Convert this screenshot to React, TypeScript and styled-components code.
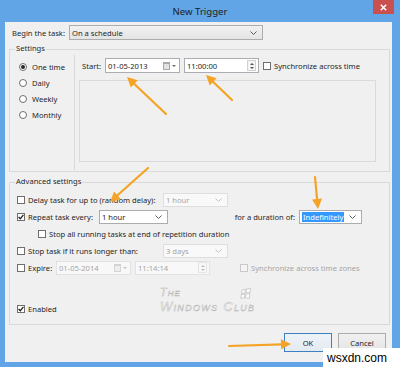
import React from 'react';
import styled, { createGlobalStyle } from 'styled-components';

const GlobalStyle = createGlobalStyle`
  html, body {
    margin: 0;
    padding: 0;
    background: #ffffff;
  }
  #root {
    width: 400px;
    height: 367px;
  }
`;

const UI_FONT = `"Noto Sans", "Liberation Sans", "DejaVu Sans", sans-serif`;

const Window = styled.div`
  position: relative;
  width: 400px;
  height: 367px;
  box-sizing: border-box;
  padding: 0 8px 5px 5px;
  background: #62a5e6;
  display: flex;
  flex-direction: column;
  overflow: hidden;
  font-family: ${UI_FONT};
`;

const TitleBar = styled.div`
  height: 22px;
  margin: 0 -8px 0 -5px;
  padding: 0 6px;
  display: grid;
  grid-template-columns: 1fr auto 1fr;
  align-items: center;
`;

const TitleText = styled.div`
  grid-column: 2;
  font-size: 9.6px;
  color: #1c1c1c;
`;

const CloseButton = styled.div`
  grid-column: 3;
  justify-self: end;
  align-self: start;
  width: 21px;
  height: 14px;
  background: #c9504c;
  display: flex;
  align-items: center;
  justify-content: center;
`;

const Body = styled.div`
  flex: 1;
  display: flex;
  flex-direction: column;
  padding: 3px 2px 0 4px;
  background: #f0f0f0;
  font-size: 7.6px;
  color: #262626;
`;

const FieldRow = styled.div`
  display: flex;
  align-items: center;
  height: 15px;
  padding-left: 3px;
`;

const FieldLabel = styled.div<{ $w: number }>`
  flex: none;
  width: ${p => p.$w}px;
  white-space: nowrap;
`;

const ComboBox = styled.div<{ $w: number; $h?: number; $flat?: boolean; $disabled?: boolean; $ml?: number }>`
  flex: none;
  box-sizing: border-box;
  width: ${p => p.$w}px;
  height: ${p => p.$h ?? 14}px;
  margin-left: ${p => p.$ml ?? 0}px;
  display: flex;
  align-items: center;
  justify-content: space-between;
  padding: 0 5px 0 2px;
  border: 1px solid ${p => (p.$disabled ? '#dedede' : '#acacac')};
  background: ${p => (p.$flat ? (p.$disabled ? '#f9f9f9' : '#ffffff') : 'linear-gradient(#f1f1f1, #e4e4e4)')};
  color: ${p => (p.$disabled ? '#a6a6a6' : 'inherit')};
  white-space: nowrap;
`;

const GroupBox = styled.section<{ $gap: number }>`
  margin-top: ${p => p.$gap}px;
  border: 1px solid #d9d9d9;
  display: flex;
  flex-direction: column;
`;

const Legend = styled.div`
  align-self: flex-start;
  margin: -7px 0 0 5px;
  padding: 0 1px;
  height: 10px;
  line-height: 10px;
  background: #f0f0f0;
`;

const SettingsContent = styled.div`
  display: flex;
  height: 118px;
`;

const RecurrenceColumn = styled.div`
  flex: none;
  box-sizing: border-box;
  width: 65px;
  margin: 2px 0 1px;
  padding: 4px 0 0 9px;
  border-right: 1px solid #d9d9d9;
`;

const RadioRow = styled.div`
  display: flex;
  align-items: center;
  gap: 5px;
  height: 16px;
`;

const Radio = styled.span<{ $checked?: boolean }>`
  flex: none;
  box-sizing: border-box;
  width: 8px;
  height: 8px;
  border-radius: 50%;
  border: 1px solid #707070;
  background: #ffffff;
  display: flex;
  align-items: center;
  justify-content: center;

  &::after {
    content: '';
    display: ${p => (p.$checked ? 'block' : 'none')};
    width: 4px;
    height: 4px;
    border-radius: 50%;
    background: #262626;
  }
`;

const RightPane = styled.div`
  flex: 1;
  display: flex;
  flex-direction: column;
  padding-left: 4px;
`;

const StartRow = styled.div`
  display: flex;
  align-items: center;
  height: 15px;
  margin-top: 5px;
  padding-left: 3px;
`;

const DetailPanel = styled.div`
  box-sizing: border-box;
  width: 297px;
  height: 82px;
  margin-top: 7px;
  border: 1px solid #dadada;
`;

const AdvancedContent = styled.div`
  position: relative;
  display: flex;
  flex-direction: column;
  padding: 5px 0 7px 7px;
`;

const OptionRow = styled.div<{ $indent?: number; $mt?: number }>`
  display: flex;
  align-items: center;
  height: 17px;
  padding-left: ${p => p.$indent ?? 0}px;
  margin-top: ${p => p.$mt ?? 0}px;
`;

const LabelCell = styled.div<{ $w?: number; $ml?: number }>`
  flex: none;
  display: flex;
  align-items: center;
  width: ${p => (p.$w ? `${p.$w}px` : 'auto')};
  margin-left: ${p => p.$ml ?? 0}px;
`;

const CheckBox = styled.span<{ $disabled?: boolean }>`
  flex: none;
  box-sizing: border-box;
  width: 8px;
  height: 8px;
  border: 1px solid ${p => (p.$disabled ? '#c8c8c8' : '#6e6e6e')};
  background: ${p => (p.$disabled ? '#f4f4f4' : '#ffffff')};
  display: flex;
  align-items: center;
  justify-content: center;
`;

const CheckLabel = styled.span<{ $disabled?: boolean }>`
  margin-left: 3px;
  white-space: nowrap;
  color: ${p => (p.$disabled ? '#a6a6a6' : 'inherit')};
`;

const Caption = styled.div<{ $w: number }>`
  flex: none;
  box-sizing: border-box;
  width: ${p => p.$w}px;
  padding-right: 4px;
  text-align: right;
  white-space: nowrap;
`;

const Highlight = styled.span`
  background: #3399ff;
  color: #ffffff;
  padding: 0 1px;
`;

const EditField = styled.div<{ $w: number; $h?: number; $disabled?: boolean; $ml?: number }>`
  flex: none;
  box-sizing: border-box;
  width: ${p => p.$w}px;
  height: ${p => p.$h ?? 15}px;
  margin-left: ${p => p.$ml ?? 0}px;
  display: flex;
  align-items: center;
  padding: 0 2px 0 2px;
  border: 1px solid ${p => (p.$disabled ? '#e2e2e2' : '#abadb3')};
  background: ${p => (p.$disabled ? '#f8f8f8' : '#ffffff')};
  color: ${p => (p.$disabled ? '#a6a6a6' : 'inherit')};
  white-space: nowrap;
`;

const FieldText = styled.span`
  flex: 1;
`;

const CalendarGlyph = styled.span<{ $disabled?: boolean }>`
  flex: none;
  box-sizing: border-box;
  width: 7px;
  height: 8px;
  border: 1px solid ${p => (p.$disabled ? '#d4d4d4' : '#a9a9a9')};
  border-top-width: 2px;
  background: ${p => (p.$disabled ? '#eeeeee' : '#e2e2e2')};
  margin-right: 2px;
`;

const DropArrow = styled.span<{ $disabled?: boolean }>`
  flex: none;
  width: 0;
  height: 0;
  margin-right: 1px;
  border-left: 2px solid transparent;
  border-right: 2px solid transparent;
  border-top: 2px solid ${p => (p.$disabled ? '#c4c4c4' : '#6a6a6a')};
`;

const Spinner = styled.span<{ $disabled?: boolean }>`
  flex: none;
  box-sizing: border-box;
  width: 9px;
  height: 11px;
  border: 1px solid ${p => (p.$disabled ? '#e4e4e4' : '#d2d2d2')};
  background: ${p => (p.$disabled ? '#f8f8f8' : '#f4f4f4')};
  display: flex;
  flex-direction: column;
  align-items: center;
  justify-content: center;
  gap: 2px;
`;

const SpinTip = styled.span<{ $down?: boolean; $disabled?: boolean }>`
  width: 0;
  height: 0;
  border-left: 2px solid transparent;
  border-right: 2px solid transparent;
  ${p => (p.$down ? 'border-top' : 'border-bottom')}: 2px solid ${p => (p.$disabled ? '#bdbdbd' : '#555555')};
`;

const Watermark = styled.div`
  position: absolute;
  left: 150px;
  top: 101px;
  font-family: "Liberation Sans", sans-serif;
  font-style: italic;
  font-variant: small-caps;
  color: #fbfbfb;
  -webkit-text-stroke: 0.45px #b4b4b4;
  line-height: 1;
  pointer-events: none;
`;

const MarkSmall = styled.div`
  font-size: 11px;
  letter-spacing: 1px;
`;

const MarkLarge = styled.div`
  display: flex;
  align-items: flex-end;
  margin-top: 2px;
  font-size: 13px;
  letter-spacing: 1.3px;
`;

const MarkLogo = styled.svg`
  position: absolute;
  left: 80px;
  top: 1px;
`;

const ButtonBar = styled.div`
  display: flex;
  justify-content: flex-end;
  gap: 6px;
  margin-top: 8px;
  padding-right: 4px;
`;

const DialogButton = styled.div<{ $default?: boolean }>`
  box-sizing: border-box;
  width: 48px;
  height: 19px;
  display: flex;
  align-items: center;
  justify-content: center;
  border: 1px solid ${p => (p.$default ? '#3d7fbf' : '#acacac')};
  background: ${p => (p.$default ? 'linear-gradient(#eef3f8, #e3eaf1)' : 'linear-gradient(#f0f0f0, #e5e5e5)')};
`;

const Overlay = styled.svg`
  position: absolute;
  left: 0;
  top: 0;
  pointer-events: none;
`;

const SiteStamp = styled.div`
  position: absolute;
  right: 0;
  bottom: 0;
  box-sizing: border-box;
  width: 77px;
  height: 19px;
  padding-left: 4px;
  background: #ffffff;
  display: flex;
  align-items: center;
  font-family: "Liberation Sans", sans-serif;
  font-size: 12px;
  color: #000000;
`;

function Chevron({ disabled }: { disabled?: boolean }) {
  return (
    <svg width="7" height="4" viewBox="0 0 7 4">
      <polyline points="0.5,0.5 3.5,3.5 6.5,0.5" fill="none" stroke={disabled ? '#c4c4c4' : '#5a5a5a'} strokeWidth="1" />
    </svg>
  );
}

function Check({ checked, disabled }: { checked?: boolean; disabled?: boolean }) {
  return (
    <CheckBox $disabled={disabled}>
      {checked && (
        <svg width="6" height="6" viewBox="0 0 6 6">
          <polyline points="0.6,3 2.3,4.8 5.4,0.8" fill="none" stroke="#1e1e1e" strokeWidth="1.3" />
        </svg>
      )}
    </CheckBox>
  );
}

function DateField({ value, disabled, h }: { value: string; disabled?: boolean; h?: number }) {
  return (
    <EditField $w={75} $h={h} $disabled={disabled}>
      <FieldText>{value}</FieldText>
      <CalendarGlyph $disabled={disabled} />
      <DropArrow $disabled={disabled} />
    </EditField>
  );
}

function TimeField({ value, disabled, h }: { value: string; disabled?: boolean; h?: number }) {
  return (
    <EditField $w={75} $h={h} $ml={4} $disabled={disabled}>
      <FieldText>{value}</FieldText>
      <Spinner $disabled={disabled}>
        <SpinTip $disabled={disabled} />
        <SpinTip $down $disabled={disabled} />
      </Spinner>
    </EditField>
  );
}

const arrows: [number, number, number, number][] = [
  [166, 114, 127, 77],
  [232, 100, 206, 75],
  [148, 168, 110, 202],
  [315, 177, 318, 209],
  [229, 346, 291, 344],
];

function Arrow({ x1, y1, x2, y2 }: { x1: number; y1: number; x2: number; y2: number }) {
  const len = Math.hypot(x2 - x1, y2 - y1);
  const ux = (x2 - x1) / len;
  const uy = (y2 - y1) / len;
  const bx = x2 - ux * 10;
  const by = y2 - uy * 10;
  const pts = `${x2},${y2} ${bx - uy * 5},${by + ux * 5} ${bx + uy * 5},${by - ux * 5}`;
  return (
    <g>
      <line x1={x1} y1={y1} x2={bx + ux} y2={by + uy} stroke="#f5a326" strokeWidth="2.2" strokeLinecap="round" />
      <polygon points={pts} fill="#f5a326" />
    </g>
  );
}

export default function App() {
  return (
    <>
      <GlobalStyle />
      <Window>
        <TitleBar>
          <TitleText>New Trigger</TitleText>
          <CloseButton>
            <svg width="7" height="7" viewBox="0 0 7 7">
              <path d="M0.8 0.8 L6.2 6.2 M6.2 0.8 L0.8 6.2" stroke="#ffffff" strokeWidth="1.5" />
            </svg>
          </CloseButton>
        </TitleBar>

        <Body>
          <FieldRow>
            <FieldLabel $w={57}>Begin the task:</FieldLabel>
            <ComboBox $w={194} $h={15}>
              <span>On a schedule</span>
              <Chevron />
            </ComboBox>
          </FieldRow>

          <GroupBox $gap={9}>
            <Legend>Settings</Legend>
            <SettingsContent>
              <RecurrenceColumn>
                <RadioRow><Radio $checked />One time</RadioRow>
                <RadioRow><Radio />Daily</RadioRow>
                <RadioRow><Radio />Weekly</RadioRow>
                <RadioRow><Radio />Monthly</RadioRow>
              </RecurrenceColumn>
              <RightPane>
                <StartRow>
                  <FieldLabel $w={23}>Start:</FieldLabel>
                  <DateField value="01-05-2013" />
                  <TimeField value="11:00:00" />
                  <LabelCell $ml={4}>
                    <Check />
                    <CheckLabel>Synchronize across time</CheckLabel>
                  </LabelCell>
                </StartRow>
                <DetailPanel />
              </RightPane>
            </SettingsContent>
          </GroupBox>

          <GroupBox $gap={10}>
            <Legend>Advanced settings</Legend>
            <AdvancedContent>
              <OptionRow>
                <LabelCell $w={146}>
                  <Check />
                  <CheckLabel>Delay task for up to (random delay):</CheckLabel>
                </LabelCell>
                <ComboBox $w={65} $flat $disabled>
                  <span>1 hour</span>
                  <Chevron disabled />
                </ComboBox>
              </OptionRow>

              <OptionRow>
                <LabelCell $w={82}>
                  <Check checked />
                  <CheckLabel>Repeat task every:</CheckLabel>
                </LabelCell>
                <ComboBox $w={69} $flat>
                  <span>1 hour</span>
                  <Chevron />
                </ComboBox>
                <Caption $w={131}>for a duration of:</Caption>
                <ComboBox $w={63} $flat>
                  <Highlight>Indefinitely</Highlight>
                  <Chevron />
                </ComboBox>
              </OptionRow>

              <OptionRow $indent={21}>
                <Check />
                <CheckLabel>Stop all running tasks at end of repetition duration</CheckLabel>
              </OptionRow>

              <OptionRow>
                <LabelCell $w={146}>
                  <Check />
                  <CheckLabel>Stop task if it runs longer than:</CheckLabel>
                </LabelCell>
                <ComboBox $w={65} $flat $disabled>
                  <span>3 days</span>
                  <Chevron disabled />
                </ComboBox>
              </OptionRow>

              <OptionRow>
                <LabelCell $w={39}>
                  <Check />
                  <CheckLabel>Expire:</CheckLabel>
                </LabelCell>
                <DateField value="01-05-2014" disabled h={14} />
                <TimeField value="11:14:14" disabled h={14} />
                <LabelCell $ml={30}>
                  <Check disabled />
                  <CheckLabel $disabled>Synchronize across time zones</CheckLabel>
                </LabelCell>
              </OptionRow>

              <OptionRow $mt={24}>
                <Check checked />
                <CheckLabel>Enabled</CheckLabel>
              </OptionRow>

              <Watermark>
                <MarkSmall>The</MarkSmall>
                <MarkLarge>Windows Club</MarkLarge>
                <MarkLogo width="12" height="12" viewBox="0 0 12 12">
                  <g fill="#fbfbfb" stroke="#b4b4b4" strokeWidth="0.6">
                    <polygon points="2,2 5.5,1.2 5,5 1.5,5.6" />
                    <polygon points="6.5,1 10.5,0.2 10,4.6 6,5" />
                    <polygon points="1.3,6.4 4.9,6 4.5,9.8 0.8,10.4" />
                    <polygon points="5.9,6 9.9,5.6 9.4,10.2 5.4,9.8" />
                  </g>
                </MarkLogo>
              </Watermark>
            </AdvancedContent>
          </GroupBox>

          <ButtonBar>
            <DialogButton $default>OK</DialogButton>
            <DialogButton>Cancel</DialogButton>
          </ButtonBar>
        </Body>

        <Overlay width="400" height="367" viewBox="0 0 400 367">
          {arrows.map(([x1, y1, x2, y2], i) => (
            <Arrow key={i} x1={x1} y1={y1} x2={x2} y2={y2} />
          ))}
        </Overlay>

        <SiteStamp>wsxdn.com</SiteStamp>
      </Window>
    </>
  );
}
